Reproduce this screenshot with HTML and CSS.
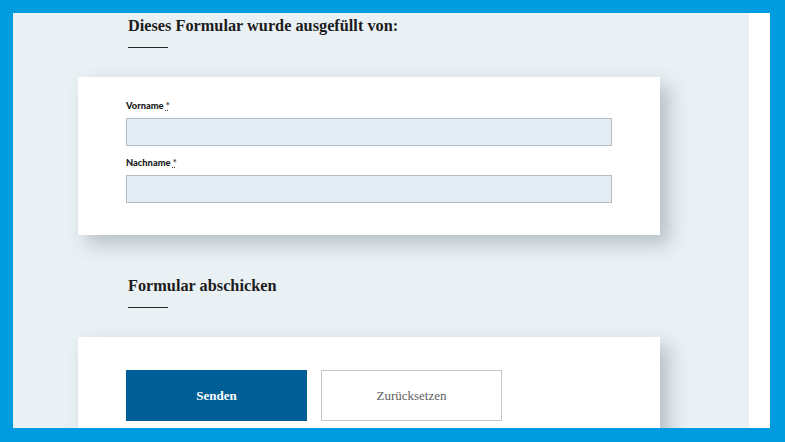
FILE: index.html
```html
<!DOCTYPE html>
<html lang="de">

<head>
    <meta charset="UTF-8">
    <meta name="viewport" content="width=device-width, initial-scale=1.0">
    <title>Formular</title>
    <link rel="stylesheet" href="styles.css">
</head>

<body>
    <div class="frame">
        <div class="page">
            <main class="content">
                <div class="section-head">
                    <h2 class="section-title">Dieses Formular wurde ausgefüllt von:</h2>
                </div>
                <div class="card">
                    <div class="field">
                        <label for="vorname">Vorname <abbr title="Pflichtfeld">*</abbr></label>
                        <input type="text" id="vorname">
                    </div>
                    <div class="field">
                        <label for="nachname">Nachname <abbr title="Pflichtfeld">*</abbr></label>
                        <input type="text" id="nachname">
                    </div>
                </div>

                <div class="section-head second">
                    <h2 class="section-title">Formular abschicken</h2>
                </div>
                <div class="card card-actions">
                    <button class="btn btn-primary" type="submit">Senden</button>
                    <button class="btn btn-secondary" type="reset">Zurücksetzen</button>
                </div>
            </main>
            <div class="gutter"></div>
        </div>
    </div>
</body>

</html>
```

FILE: styles.css
```css
body {
    margin: 0;
    font-family: "Liberation Serif", serif;
    overflow: hidden;
}

.frame {
    box-sizing: border-box;
    width: 785px;
    height: 442px;
    border-style: solid;
    border-color: #009cdf;
    border-width: 13px 15px 14px 13px;
    overflow: hidden;
}

.page {
    display: flex;
    height: 100%;
}

.content {
    flex: 1;
    background-color: #eaf1f5;
    padding-top: 1px;
}

.gutter {
    width: 21px;
    background-color: #fff;
}

/* Überschriften */
.section-head {
    padding-left: 115px;
}

.section-head.second {
    margin-top: 39px;
}

.section-title {
    margin: 0;
    font-size: 16.3px;
    line-height: 24px;
    font-weight: bold;
    color: #1c1c1c;
}

.section-head::after {
    content: "";
    display: block;
    width: 40px;
    height: 1px;
    margin-top: 9px;
    background-color: #2a2a2a;
}

/* Karten */
.card {
    margin: 29px 0 0 65px;
    width: 582px;
    box-sizing: border-box;
    padding: 23px 48px 32px;
    background-color: #fff;
    box-shadow: 9px 9px 18px rgba(60, 75, 85, 0.3);
}

.field + .field {
    margin-top: 11px;
}

.field label {
    display: block;
    font-family: Lato, "Liberation Sans", sans-serif;
    font-size: 9.3px;
    line-height: 12px;
    font-weight: 900;
    color: #1a1a1a;
    margin-bottom: 6px;
}

.field abbr {
    text-decoration: underline dotted;
    color: #444;
}

.field input {
    display: block;
    box-sizing: border-box;
    width: 100%;
    height: 28px;
    margin: 0;
    background-color: #e2ecf2;
    border: 1px solid #b6bec3;
}

.card-actions {
    display: flex;
    gap: 14px;
    padding-top: 33px;
    height: 120px;
}

.btn {
    width: 181px;
    height: 51px;
    font-family: "Liberation Serif", serif;
    font-size: 13px;
    cursor: pointer;
}

.btn-primary {
    background-color: #005e96;
    border: 1px solid #005e96;
    color: #fff;
    font-weight: bold;
}

.btn-secondary {
    background-color: #fff;
    border: 1px solid #c6c6c6;
    color: #5e5e5e;
}
```
